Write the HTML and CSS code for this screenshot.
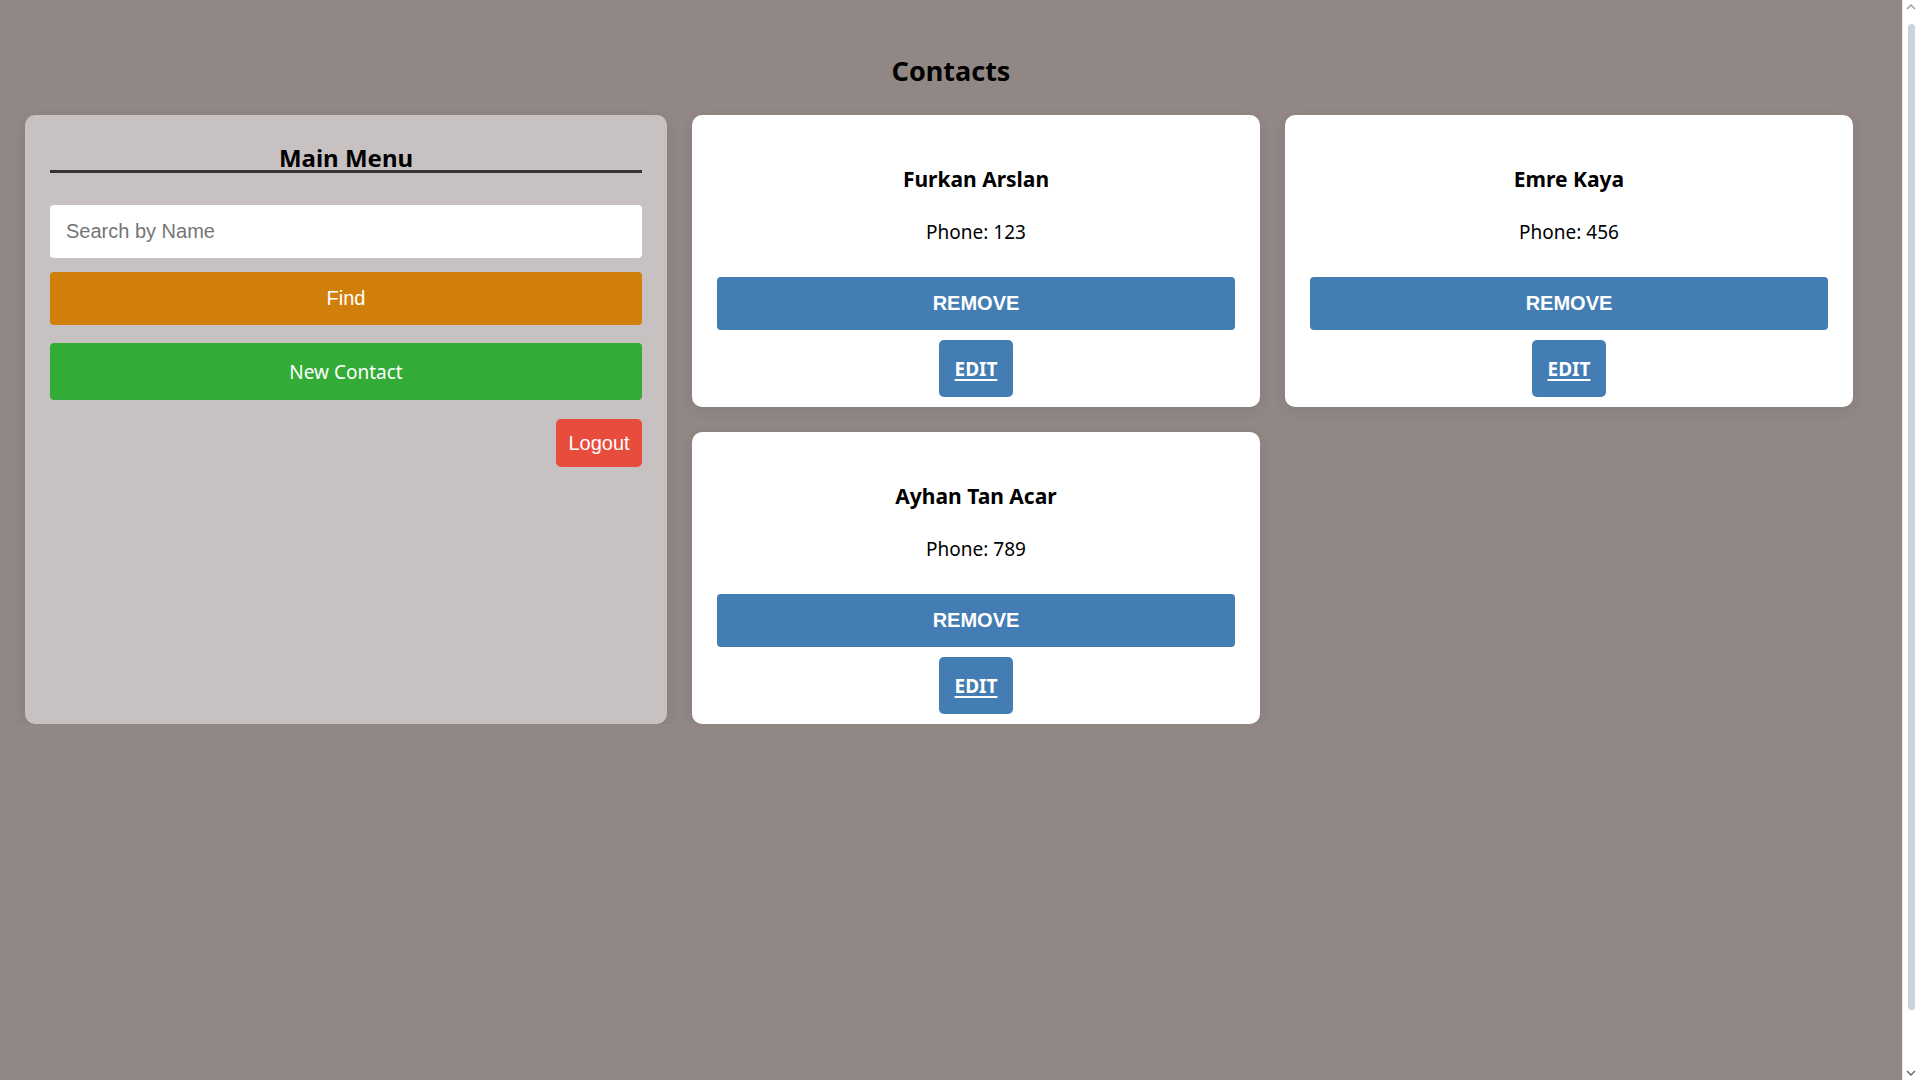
FILE: index.html
```html
<!DOCTYPE html>
<html lang="en">
<head>
<meta charset="utf-8">
<title>Contacts</title>
<link rel="stylesheet" href="styles.css">
</head>
<body>
<div class="page">
  <h1 class="title">Contacts</h1>
  <div class="layout">
    <aside class="menu">
      <h2 class="menu-title">Main Menu</h2>
      <input class="search" type="text" placeholder="Search by Name">
      <button class="btn btn-find">Find</button>
      <button class="btn btn-new">New Contact</button>
      <div class="logout-row"><button class="btn btn-logout">Logout</button></div>
    </aside>
    <div class="card">
      <h3 class="name">Furkan Arslan</h3>
      <p class="phone">Phone: 123</p>
      <button class="btn btn-remove">REMOVE</button>
      <div class="edit-row"><a class="btn-edit" href="#">EDIT</a></div>
    </div>
    <div class="card">
      <h3 class="name">Emre Kaya</h3>
      <p class="phone">Phone: 456</p>
      <button class="btn btn-remove">REMOVE</button>
      <div class="edit-row"><a class="btn-edit" href="#">EDIT</a></div>
    </div>
    <div class="card">
      <h3 class="name">Ayhan Tan Acar</h3>
      <p class="phone">Phone: 789</p>
      <button class="btn btn-remove">REMOVE</button>
      <div class="edit-row"><a class="btn-edit" href="#">EDIT</a></div>
    </div>
  </div>
</div>
<div class="scrollbar" aria-hidden="true">
  <svg class="sb-arrow sb-up" width="10" height="6" viewBox="0 0 10 6"><path d="M1 5 L5 1 L9 5" fill="none" stroke="#9a9a9a" stroke-width="1.3"/></svg>
  <div class="sb-thumb"></div>
  <svg class="sb-arrow sb-down" width="10" height="6" viewBox="0 0 10 6"><path d="M1 1 L5 5 L9 1" fill="none" stroke="#606060" stroke-width="1.3"/></svg>
</div>
</body>
</html>
```
FILE: styles.css
```css
html, body {
  margin: 0;
  padding: 0;
}
body {
  background: #918886;
  font-family: "Noto Sans", "Open Sans", sans-serif;
  color: #000;
}
.page {
  margin-right: 18px;
  padding: 0 25px;
}
.title {
  margin: 0;
  padding-top: 55px;
  margin-bottom: 28px;
  font-size: 27px;
  line-height: 32px;
  font-weight: 700;
  text-align: center;
}
.layout {
  display: grid;
  grid-template-columns: 642px 568px 568px;
  column-gap: 25px;
  row-gap: 25px;
  align-items: stretch;
}
.menu {
  grid-row: span 2;
  background: #c7c1c1;
  border-radius: 10px;
  padding: 31px 25px 25px;
  box-shadow: 0 4px 14px rgba(0, 0, 0, 0.08);
  display: flex;
  flex-direction: column;
}
.menu-title {
  margin: 0;
  font-size: 24px;
  line-height: 24px;
  font-weight: 700;
  text-align: center;
  border-bottom: 3px solid #333;
}
.search {
  margin-top: 32px;
  height: 53px;
  box-sizing: border-box;
  border: none;
  border-radius: 4px;
  background: #fff;
  padding: 0 16px;
  font-family: "Liberation Sans", Arial, sans-serif;
  font-size: 20px;
  outline: none;
}
.search::placeholder {
  color: #757575;
}
.btn {
  border: none;
  color: #fff;
  cursor: pointer;
  border-radius: 4px;
  padding: 0;
}
.btn-find {
  margin-top: 14px;
  height: 53px;
  background: #d07f0a;
  font-family: "Liberation Sans", Arial, sans-serif;
  font-size: 20px;
}
.btn-new {
  margin-top: 18px;
  height: 57px;
  background: #32ab37;
  font-family: "Noto Sans", sans-serif;
  font-size: 19px;
}
.logout-row {
  margin-top: 19px;
  display: flex;
  justify-content: flex-end;
}
.btn-logout {
  width: 86px;
  height: 48px;
  background: #e74c3c;
  border-radius: 5px;
  font-family: "Liberation Sans", Arial, sans-serif;
  font-size: 20px;
}
.card {
  background: #fff;
  border-radius: 10px;
  padding: 25px 25px 10px;
  box-shadow: 0 4px 14px rgba(0, 0, 0, 0.08);
  display: flex;
  flex-direction: column;
  text-align: center;
}
.name {
  margin: 25px 0 0;
  font-size: 21px;
  line-height: 28px;
  font-weight: 700;
}
.phone {
  margin: 26px 0 0;
  font-size: 19px;
  line-height: 26px;
}
.btn-remove {
  margin-top: 32px;
  height: 53px;
  width: 100%;
  background: #437db4;
  font-family: "Liberation Sans", Arial, sans-serif;
  font-weight: 700;
  font-size: 20px;
}
.edit-row {
  margin-top: 10px;
  display: flex;
  justify-content: center;
}
.btn-edit {
  display: flex;
  align-items: center;
  justify-content: center;
  width: 74px;
  height: 57px;
  background: #437db4;
  color: #fff;
  border-radius: 5px;
  font-weight: 700;
  font-size: 19px;
  text-decoration: underline;
  text-decoration-thickness: 2px;
  text-underline-offset: 3px;
}
.scrollbar {
  position: fixed;
  top: 0;
  right: 0;
  width: 18px;
  height: 100vh;
  background: #ffffff;
  border-left: 1px solid #e6e6e6;
  box-sizing: border-box;
}
.sb-arrow {
  position: absolute;
  left: 3px;
}
.sb-up {
  top: 4px;
}
.sb-down {
  bottom: 4px;
}
.sb-thumb {
  position: absolute;
  top: 24px;
  left: 5px;
  width: 7px;
  height: 986px;
  border-radius: 4px;
  background: #cad3d9;
}
```
